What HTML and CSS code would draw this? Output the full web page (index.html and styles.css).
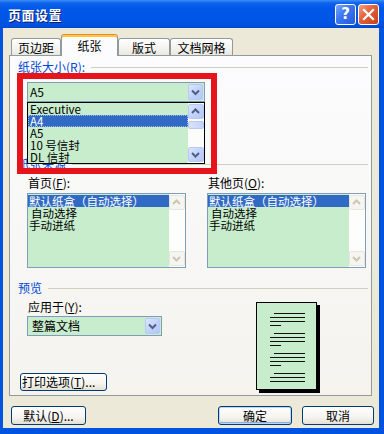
FILE: index.html
```html
<!DOCTYPE html>
<html lang="zh-CN">
<head>
<meta charset="utf-8">
<title>页面设置</title>
<link rel="stylesheet" href="styles.css">
</head>
<body>
<div class="window">
  <div class="titlebar">
    <span class="title">页面设置</span>
    <div class="tb-buttons">
      <span class="tb-btn help">?</span>
      <span class="tb-btn close"><svg width="21" height="21" viewBox="0 0 21 21"><path d="M6 6 L15 15 M15 6 L6 15" stroke="#fff" stroke-width="2.2" stroke-linecap="square"/></svg></span>
    </div>
  </div>
  <div class="frame">
    <div class="body">
      <div class="tabs">
        <div class="tab t1">页边距</div>
        <div class="tab active t2">纸张</div>
        <div class="tab t3">版式</div>
        <div class="tab t4">文档网格</div>
      </div>
      <div class="panel">
        <div class="group-head"><span>纸张大小(<u>R</u>):</span><i class="rule"></i></div>
        <div class="combo size-combo">
          <span class="combo-text">A5</span>
          <span class="arrow-btn"><svg width="15" height="16" viewBox="0 0 15 16"><path d="M4 6.5 L7.5 10 L11 6.5" fill="none" stroke="#4D6185" stroke-width="2"/></svg></span>
        </div>
        <div class="group-head src-head"><span>纸张来源</span><i class="rule"></i></div>
        <div class="sources">
          <div class="src-col">
            <div class="lbl">首页(<u>F</u>):</div>
            <div class="listbox">
              <div class="items">
                <div class="item sel">默认纸盒（自动选择）</div>
                <div class="item ind">自动选择</div>
                <div class="item">手动进纸</div>
              </div>
              <div class="vscroll disabled">
                <span class="sb-btn"><svg width="15" height="15" viewBox="0 0 15 15"><path d="M4 9 L7.5 5.5 L11 9" fill="none" stroke="#C9C7BA" stroke-width="2"/></svg></span>
                <span class="sb-track"></span>
                <span class="sb-btn"><svg width="15" height="15" viewBox="0 0 15 15"><path d="M4 6 L7.5 9.5 L11 6" fill="none" stroke="#C9C7BA" stroke-width="2"/></svg></span>
              </div>
            </div>
          </div>
          <div class="src-col">
            <div class="lbl">其他页(<u>O</u>):</div>
            <div class="listbox">
              <div class="items">
                <div class="item sel">默认纸盒（自动选择）</div>
                <div class="item ind">自动选择</div>
                <div class="item">手动进纸</div>
              </div>
              <div class="vscroll disabled">
                <span class="sb-btn"><svg width="15" height="15" viewBox="0 0 15 15"><path d="M4 9 L7.5 5.5 L11 9" fill="none" stroke="#C9C7BA" stroke-width="2"/></svg></span>
                <span class="sb-track"></span>
                <span class="sb-btn"><svg width="15" height="15" viewBox="0 0 15 15"><path d="M4 6 L7.5 9.5 L11 6" fill="none" stroke="#C9C7BA" stroke-width="2"/></svg></span>
              </div>
            </div>
          </div>
        </div>
        <div class="group-head pv-head"><span>预览</span><i class="rule"></i></div>
        <div class="preview">
          <div class="pv-left">
            <div class="lbl">应用于(<u>Y</u>):</div>
            <div class="combo apply-combo">
              <span class="combo-text">整篇文档</span>
              <span class="arrow-btn"><svg width="15" height="16" viewBox="0 0 15 16"><path d="M4 6.5 L7.5 10 L11 6.5" fill="none" stroke="#4D6185" stroke-width="2"/></svg></span>
            </div>
            <div class="btn print-btn">打印选项(<u>T</u>)...</div>
          </div>
          <svg class="page" width="64" height="91" viewBox="0 0 64 91">
            <rect x="3" y="3" width="61" height="88" fill="#000"/>
            <rect x="0.5" y="0.5" width="60" height="87" fill="#C7EDCC" stroke="#000"/>
            <g fill="#111">
              <rect x="18" y="11" width="31" height="1"/>
              <rect x="14" y="15" width="35" height="1"/>
              <rect x="14" y="19" width="35" height="1"/>
              <rect x="14" y="23" width="11" height="1"/>
              <rect x="18" y="31" width="31" height="1"/>
              <rect x="14" y="35" width="35" height="1"/>
              <rect x="14" y="39" width="35" height="1"/>
              <rect x="14" y="43" width="11" height="1"/>
              <rect x="18" y="51" width="31" height="1"/>
              <rect x="14" y="55" width="35" height="1"/>
              <rect x="14" y="59" width="35" height="1"/>
              <rect x="14" y="63" width="11" height="1"/>
              <rect x="18" y="71" width="31" height="1"/>
              <rect x="14" y="75" width="35" height="1"/>
              <rect x="14" y="79" width="35" height="1"/>
            </g>
          </svg>
        </div>

        <div class="dropdown">
          <div class="items">
            <div class="item">Executive</div>
            <div class="item sel focus">A4</div>
            <div class="item">A5</div>
            <div class="item">10 号信封</div>
            <div class="item">DL 信封</div>
          </div>
          <div class="vscroll">
            <span class="sb-btn on"><svg width="15" height="15" viewBox="0 0 15 15"><path d="M4 9 L7.5 5.5 L11 9" fill="none" stroke="#4D6185" stroke-width="2"/></svg></span>
            <span class="sb-thumb"></span>
            <span class="sb-track"></span>
            <span class="sb-btn on"><svg width="15" height="15" viewBox="0 0 15 15"><path d="M4 6 L7.5 9.5 L11 6" fill="none" stroke="#4D6185" stroke-width="2"/></svg></span>
          </div>
        </div>
        <div class="annot"></div>
      </div>
      <div class="footer">
        <div class="btn fbtn b-default">默认(<u>D</u>)...</div>
        <div class="spacer"></div>
        <div class="btn fbtn b-ok">确定</div>
        <div class="btn fbtn b-cancel">取消</div>
      </div>
    </div>
  </div>
</div>
</body>
</html>
```

FILE: styles.css
```css
html, body {
  margin: 0;
  padding: 0;
}
body {
  width: 384px;
  height: 434px;
  overflow: hidden;
  font-family: "Noto Sans CJK SC", "Noto Sans", sans-serif;
  font-size: 12px;
  color: #000;
}
u { text-decoration: underline; text-underline-offset: 1px; }

.window {
  width: 384px;
  height: 434px;
  display: flex;
  flex-direction: column;
  background: #0052E0;
}

.titlebar {
  height: 28px;
  flex: none;
  display: flex;
  align-items: center;
  justify-content: space-between;
  padding: 0 5px 0 8px;
  background: linear-gradient(to bottom, #3D8FF8 0px, #0F63EB 3px, #0058E8 8px, #0055E6 20px, #0050DE 26px, #0046C8 28px);
}
.title {
  color: #fff;
  font-weight: bold;
  font-size: 13px;
  letter-spacing: 0.5px;
  line-height: 16px;
  text-shadow: 1px 1px 0 #0A1E6E;
  margin-top: 1px;
}
.tb-buttons {
  display: flex;
  gap: 2px;
  margin-top: 1px;
}
.tb-btn {
  width: 21px;
  height: 21px;
  box-sizing: border-box;
  border: 1px solid #fff;
  border-radius: 3px;
  display: flex;
  align-items: center;
  justify-content: center;
  color: #fff;
}
.tb-btn svg { display: block; margin: -1px; }
.help {
  background: linear-gradient(135deg, #7BA6F8 0%, #3C74F0 45%, #245BDA 100%);
  font-family: "DejaVu Sans", sans-serif;
  font-weight: bold;
  font-size: 15px;
  line-height: 19px;
}
.close {
  background: linear-gradient(135deg, #F2A083 0%, #E2603A 45%, #C9401A 100%);
}

.frame {
  flex: 1;
  display: flex;
  padding: 0 5px 6px 3px;
}
.body {
  flex: 1;
  background: #ECE9D8;
  display: flex;
  flex-direction: column;
  padding: 6px 5px 0 6px;
}

/* tabs */
.tabs {
  height: 21px;
  display: flex;
  align-items: flex-end;
  margin-left: 2px;
}
.tab {
  height: 17px;
  box-sizing: border-box;
  border: 1px solid #919B9C;
  border-bottom: none;
  border-radius: 3px 3px 0 0;
  background: linear-gradient(to bottom, #FFFFFF, #F6F5F1 50%, #E9E8E1);
  display: flex;
  align-items: center;
  justify-content: center;
  line-height: 14px;
  padding-top: 2px;
}
.tab.active {
  height: 22px;
  margin-bottom: -1px;
  position: relative;
  z-index: 2;
  background: #FCFCFE;
  border-top: 1px solid #E68B2C;
  box-shadow: inset 0 2px 0 #FFC83C;
  padding-top: 1px;
}
.t1 { width: 50px; }
.t2 { width: 57px; }
.t3 { width: 52px; }
.t4 { width: 63px; }

/* panel */
.panel {
  position: relative;
  width: 363px;
  height: 341px;
  box-sizing: border-box;
  border: 1px solid #919B9C;
  background: linear-gradient(to bottom, #FCFCFE, #F4F3EE);
  padding: 4px 0 0 8px;
  display: flex;
  flex-direction: column;
}
.group-head {
  height: 14px;
  line-height: 14px;
  display: flex;
  align-items: center;
  color: #0046D5;
  white-space: nowrap;
}
.group-head .rule {
  flex: 1;
  height: 1px;
  background: #D0D0BF;
  margin: 1px 3px 0 6px;
}
.src-head { margin-top: 55px; }
.pv-head { margin-top: 13px; }

.combo {
  height: 20px;
  box-sizing: border-box;
  border: 1px solid #7F9DB9;
  background: #C7EDCC;
  display: flex;
  align-items: center;
  justify-content: space-between;
}
.combo-text {
  padding-left: 2px;
  line-height: 16px;
}
.arrow-btn {
  width: 15px;
  height: 16px;
  margin-right: 1px;
  box-sizing: border-box;
  border: 1px solid #B7C9F4;
  border-radius: 2px;
  background: linear-gradient(135deg, #DDE6FD 0%, #C3D3FA 50%, #B3C6F5 100%);
  display: flex;
}
.arrow-btn svg { display: block; margin: -1px; }
.size-combo {
  width: 178px;
  margin: 8px 0 0 9px;
}
.apply-combo {
  width: 135px;
  margin: 2px 0 0 9px;
}
.apply-combo .combo-text { padding-left: 4px; }

.lbl {
  line-height: 14px;
  height: 14px;
  padding-left: 10px;
  white-space: nowrap;
}

.sources {
  display: grid;
  grid-template-columns: 159px 159px;
  column-gap: 21px;
  margin-top: 5px;
  padding-left: 9px;
}
.src-col .lbl { padding-left: 1px; }
.listbox {
  margin-top: 3px;
  height: 75px;
  box-sizing: border-box;
  border: 1px solid #7F9DB9;
  background: #C7EDCC;
  display: flex;
}
.items {
  flex: 1;
  padding-top: 1px;
}
.item {
  height: 12px;
  line-height: 12px;
  font-size: 11.5px;
  padding-left: 1px;
  white-space: nowrap;
}
.item.ind { padding-left: 3px; }
.item.sel {
  background: #316AC5;
  color: #fff;
}
.vscroll {
  width: 16px;
  display: flex;
  flex-direction: column;
  background: #FDFDFB;
}
.sb-btn {
  height: 15px;
  margin: 1px 0;
  box-sizing: border-box;
  border: 1px solid #E8E6DC;
  border-radius: 2px;
  background: #F6F5F0;
  display: flex;
}
.sb-btn svg { display: block; margin: -1px; }
.sb-btn.on {
  border-color: #B7C9F4;
  background: linear-gradient(135deg, #DDE6FD 0%, #C3D3FA 50%, #B3C6F5 100%);
}
.sb-track { flex: 1; }
.sb-thumb {
  height: 8px;
  margin-top: 1px;
  box-sizing: border-box;
  border: 1px solid #B7C9F4;
  border-radius: 2px;
  background: linear-gradient(to right, #D8E3FC, #C3D3FA);
}

.preview {
  display: flex;
  margin-top: 5px;
}
.pv-left {
  width: 238px;
  display: flex;
  flex-direction: column;
}
.page {
  display: block;
  margin-top: 2px;
}
.btn {
  box-sizing: border-box;
  border: 1px solid #003C74;
  border-radius: 3px;
  background: linear-gradient(to bottom, #FFFFFF 0%, #F5F4EF 60%, #E3E0D6 100%);
  display: flex;
  align-items: center;
  justify-content: center;
  line-height: 14px;
  white-space: nowrap;
}
.print-btn {
  width: 87px;
  height: 18px;
  margin: 37px 0 0 2px;
  justify-content: flex-start;
  padding-left: 1px;
  overflow: hidden;
}

/* popup list (overlays the page) */
.dropdown {
  position: absolute;
  left: 17px;
  top: 46px;
  width: 178px;
  height: 62px;
  box-sizing: border-box;
  border: 1px solid #000;
  background: #C7EDCC;
  display: flex;
  z-index: 3;
}
.dropdown .items { padding-top: 0; }
.dropdown .item { padding-left: 2px; }
.dropdown .item.focus { outline: 1px dotted #9DB6E6; outline-offset: -1px; }
.dropdown .vscroll { background: #FCFCFA; }

/* red annotation frame */
.annot {
  position: absolute;
  left: 7px;
  top: 17px;
  width: 200px;
  height: 101px;
  box-sizing: border-box;
  border: 6px solid #E8141C;
  z-index: 4;
}

/* footer */
.footer {
  display: flex;
  margin-top: 10px;
}
.fbtn { height: 19px; }
.b-default { width: 75px; margin-left: 2px; }
.spacer { flex: 1; }
.b-ok {
  width: 74px;
  margin-right: 10px;
  box-shadow: inset 0 0 0 1px #BCD4F6, inset 0 -1px 0 1px #89ADE4;
}
.b-cancel { width: 72px; }
```
